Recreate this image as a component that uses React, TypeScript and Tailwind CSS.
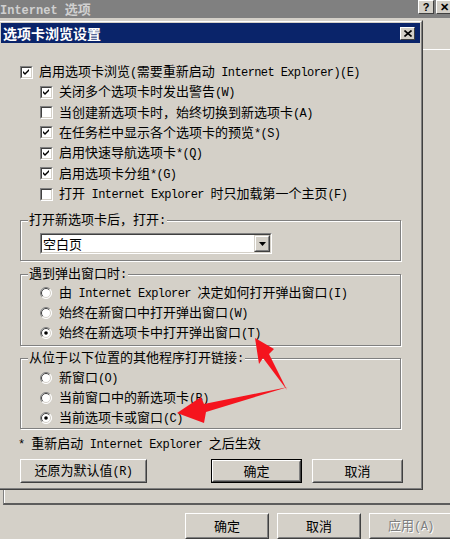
import React from "react";

// splits a label so ASCII runs get the narrow mono face (like SimSun's half-width glyphs)
const Txt = ({ s }: { s: string }) => {
  const parts = s.split(/([\x20-\x7e]+)/).filter(Boolean);
  return (
    <>
      {parts.map((p, i) =>
        /^[\x20-\x7e]+$/.test(p) ? (
          <span key={i} className="font-['Liberation_Mono',monospace] text-[12px] tracking-[-0.6px] whitespace-pre">
            {p}
          </span>
        ) : (
          <span key={i}>{p}</span>
        )
      )}
    </>
  );
};

const Check = ({ on }: { on: boolean }) => (
  <span className="block w-[13px] h-[13px] shrink-0 border border-t-[#808080] border-l-[#808080] border-b-white border-r-white">
    <span className="block w-full h-full border border-t-[#404040] border-l-[#404040] border-b-[#d4d0c8] border-r-[#d4d0c8] bg-white">
      {on && (
        <svg width="9" height="9" viewBox="0 0 9 9" className="block">
          <path d="M1 3 L3 5 L7 1 L7 3 L3 7 L1 5 Z" fill="black" />
        </svg>
      )}
    </span>
  </span>
);

const Radio = ({ on }: { on: boolean }) => (
  <svg width="12" height="12" viewBox="0 0 12 12" className="block shrink-0">
    <circle cx="6" cy="6" r="5.5" fill="white" />
    <path d="M2.1 9.9 A5.5 5.5 0 0 1 9.9 2.1" stroke="#808080" fill="none" />
    <path d="M9.9 2.1 A5.5 5.5 0 0 1 2.1 9.9" stroke="#ffffff" fill="none" />
    <path d="M2.8 9.2 A4.5 4.5 0 0 1 9.2 2.8" stroke="#404040" fill="none" />
    <path d="M9.2 2.8 A4.5 4.5 0 0 1 2.8 9.2" stroke="#d4d0c8" fill="none" />
    {on && <circle cx="6" cy="6" r="1.8" fill="black" />}
  </svg>
);

interface BtnProps {
  label: string;
  className: string;
  def?: boolean;
  disabled?: boolean;
}

const Btn = ({ label, className, def, disabled }: BtnProps) => (
  <div className={`${className} shrink-0 ${def ? "border border-black" : ""}`}>
    <div className="h-full border border-t-white border-l-white border-b-[#404040] border-r-[#404040]">
      <div className="h-full border border-t-[#d4d0c8] border-l-[#d4d0c8] border-b-[#808080] border-r-[#808080] flex items-center justify-center">
        <span className={disabled ? "text-[#808080] [text-shadow:1px_1px_0_#fff]" : ""}>
          <Txt s={label} />
        </span>
      </div>
    </div>
  </div>
);

const CapBtn = ({ glyph }: { glyph: string }) => (
  <div className="w-[16px] h-[14px] bg-[#d4d0c8] border border-t-white border-l-white border-b-[#404040] border-r-[#404040] flex items-center justify-center">
    <span className="font-['Liberation_Sans',sans-serif] font-bold text-[11px] leading-none text-black">{glyph}</span>
  </div>
);

const Group = ({ legend, children, className }: { legend: string; children: React.ReactNode; className: string }) => (
  <fieldset className={`w-[381px] border border-[#808080] shadow-[inset_1px_1px_0_#fff,1px_1px_0_#fff] ${className}`}>
    <legend className="ml-[7px] px-[1px] bg-[#d4d0c8] leading-[16px]">
      <Txt s={legend} />
    </legend>
    {children}
  </fieldset>
);

const subs: [boolean, string][] = [
  [true, "关闭多个选项卡时发出警告(W)"],
  [false, "当创建新选项卡时，始终切换到新选项卡(A)"],
  [true, "在任务栏中显示各个选项卡的预览*(S)"],
  [true, "启用快速导航选项卡*(Q)"],
  [true, "启用选项卡分组*(G)"],
  [false, "打开 Internet Explorer 时只加载第一个主页(F)"],
];

const popups: [boolean, string][] = [
  [false, "由 Internet Explorer 决定如何打开弹出窗口(I)"],
  [false, "始终在新窗口中打开弹出窗口(W)"],
  [true, "始终在新选项卡中打开弹出窗口(T)"],
];

const links: [boolean, string][] = [
  [false, "新窗口(O)"],
  [false, "当前窗口中的新选项卡(B)"],
  [true, "当前选项卡或窗口(C)"],
];

export default function App() {
  return (
    <div className="relative w-[450px] h-[539px] overflow-hidden bg-[#d4d0c8] text-black text-[13px] leading-[16px] font-['Noto_Sans_CJK_SC',sans-serif]">
      {/* outer Internet Options window */}
      <div className="flex flex-col h-full">
        <div className="h-[18px] bg-[#808080] flex items-start justify-between shrink-0">
          <span className="pt-[1px] text-[#d0d0d0] font-bold leading-[16px]">
            <span className="font-['Liberation_Mono',monospace] text-[12px] font-bold">Internet </span>
            选项
          </span>
          <div className="flex gap-[2px] -mr-[2px]">
            <CapBtn glyph="?" />
            <CapBtn glyph="✕" />
          </div>
        </div>
        <div className="mt-[31px] ml-[3px] -mr-[10px] h-[457px] border-t border-l border-t-white border-l-[#808080] border-b-2 border-b-[#5c5c5c] shadow-[inset_1px_0_0_#fff]" />
        <div className="mt-[8px] ml-[185px] -mr-[2px] flex gap-[8px]">
          <Btn label="确定" className="w-[84px] h-[26px]" />
          <Btn label="取消" className="w-[84px] h-[26px]" />
          <Btn label="应用(A)" className="w-[84px] h-[26px]" disabled />
        </div>
      </div>

      {/* 选项卡浏览设置 dialog window */}
      <div className="absolute left-[-2px] top-[20px] w-[425px] h-[470px] bg-[#d4d0c8] border border-t-[#d4d0c8] border-l-[#d4d0c8] border-b-[#404040] border-r-[#404040]">
        <div className="h-full border border-t-white border-l-white border-b-[#808080] border-r-[#808080] p-[1px] flex flex-col">
          <div className="h-[20px] bg-[#0a246a] flex items-center justify-between shrink-0">
            <span className="pl-[2px] text-white font-bold text-[14px]">选项卡浏览设置</span>
            <div className="mr-[5px] w-[15px] h-[13px] bg-[#d4d0c8] border border-t-white border-l-white border-b-[#404040] border-r-[#404040] flex items-center justify-center">
              <svg width="8" height="7" viewBox="0 0 8 7">
                <path d="M0.5 0.5 L7.5 6.5 M7.5 0.5 L0.5 6.5" stroke="black" strokeWidth="1.6" />
              </svg>
            </div>
          </div>

          <div className="flex flex-col pl-[19px]">
            <div className="mt-[19px] h-[20px] flex items-center gap-[6px]">
              <Check on />
              <span><Txt s="启用选项卡浏览(需要重新启动 Internet Explorer)(E)" /></span>
            </div>
            {subs.map(([on, s]) => (
              <div key={s} className="pl-[20px] h-[20.4px] flex items-center gap-[6px]">
                <Check on={on} />
                <span><Txt s={s} /></span>
              </div>
            ))}

            <Group legend="打开新选项卡后，打开:" className="mt-[7px] pb-[6px]">
              <div className="pl-[19px] pt-[4px]">
                <div className="w-[232px] h-[21px] border border-t-[#808080] border-l-[#808080] border-b-white border-r-white">
                  <div className="h-full border border-t-[#404040] border-l-[#404040] border-b-[#d4d0c8] border-r-[#d4d0c8] bg-white flex items-center">
                    <span className="pl-[1px] flex-1">空白页</span>
                    <div className="w-[16px] h-full bg-[#d4d0c8] border border-t-[#d4d0c8] border-l-[#d4d0c8] border-b-[#404040] border-r-[#404040]">
                      <div className="h-full border border-t-white border-l-white border-b-[#808080] border-r-[#808080] flex items-center justify-center">
                        <svg width="7" height="4" viewBox="0 0 7 4">
                          <path d="M0 0 H7 L3.5 4 Z" fill="black" />
                        </svg>
                      </div>
                    </div>
                  </div>
                </div>
              </div>
            </Group>

            <Group legend="遇到弹出窗口时:" className="mt-[4px] pb-[2px]">
              <div className="pl-[19px]">
                {popups.map(([on, s]) => (
                  <div key={s} className="h-[20px] flex items-center gap-[7px]">
                    <Radio on={on} />
                    <span><Txt s={s} /></span>
                  </div>
                ))}
              </div>
            </Group>

            <Group legend="从位于以下位置的其他程序打开链接:" className="mt-[3px]">
              <div className="pl-[19px] pt-[1px]">
                {links.map(([on, s]) => (
                  <div key={s} className="h-[20px] flex items-center gap-[7px]">
                    <Radio on={on} />
                    <span><Txt s={s} /></span>
                  </div>
                ))}
              </div>
            </Group>

            <div className="mt-[6px] -ml-[2px] h-[16px]">
              <Txt s="* 重新启动 Internet Explorer 之后生效" />
            </div>

            <div className="mt-[8px] flex">
              <Btn label="还原为默认值(R)" className="w-[127px] h-[24px]" />
              <Btn label="确定" className="ml-[64px] w-[91px] h-[24px]" def />
              <Btn label="取消" className="ml-[10px] w-[91px] h-[24px]" />
            </div>
          </div>
        </div>
      </div>

      {/* red annotation arrows */}
      <svg className="absolute inset-0 pointer-events-none" width="450" height="539" viewBox="0 0 450 539">
        <polygon points="255,338 274,349 269,354 287,390 263,358 259,364" fill="#f5141e" />
        <polygon points="177,413 201,397 204,404 288,387 206,412 204,423" fill="#f5141e" />
      </svg>
    </div>
  );
}
